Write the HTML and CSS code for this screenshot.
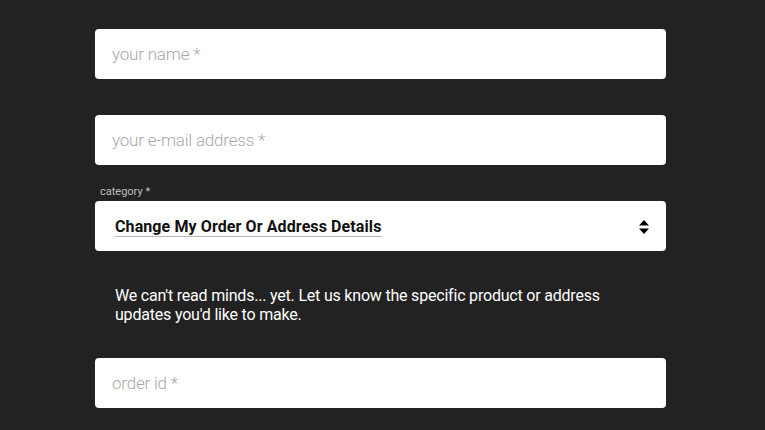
FILE: index.html
```html
<!DOCTYPE html>
<html>
<head>
<meta charset="utf-8">
<link rel="stylesheet" href="styles.css">
</head>
<body>
<form class="form">
  <div class="field field-first">
    <div class="input"><span class="placeholder">your name *</span></div>
  </div>
  <div class="field field-email">
    <div class="input"><span class="placeholder">your e-mail address *</span></div>
  </div>
  <div class="field field-category">
    <div class="label">category *</div>
    <div class="input select">
      <span class="value">Change My Order Or Address Details</span>
      <svg class="arrows" width="10" height="14" viewBox="0 0 10 14"><path d="M5 0 L10 5.5 H0 Z M0 8.5 H10 L5 14 Z" fill="#000"/></svg>
    </div>
  </div>
  <p class="note">We can't read minds... yet. Let us know the specific product or address updates you'd like to make.</p>
  <div class="field field-order">
    <div class="input"><span class="placeholder">order id *</span></div>
  </div>
</form>
</body>
</html>
```
FILE: styles.css
```css
html, body {
  margin: 0;
  padding: 0;
  background: #222222;
  height: 100%;
  overflow: hidden;
}
body {
  font-family: "Roboto", sans-serif;
}
.form {
  width: 571px;
  margin: 0 0 0 95px;
  padding-top: 29px;
}
.input {
  background: #fff;
  height: 50px;
  border-radius: 4px;
  display: flex;
  align-items: center;
  padding: 0 17px;
  box-sizing: border-box;
}
.placeholder {
  color: #a9a9a9;
  font-size: 17px;
  font-weight: 300;
  font-family: "Roboto", "DejaVu Sans", sans-serif;
  letter-spacing: -0.2px;
}
.field-email { margin-top: 36px; }
.field-category { margin-top: 21px; }
.label {
  color: #bdbdbd;
  font-size: 11px;
  font-family: "Roboto", sans-serif;
  margin-left: 5px;
  height: 15px;
  line-height: 11px;
}
.select {
  justify-content: space-between;
  padding: 0 17px 0 20px;
}
.value {
  color: #111;
  font-size: 16px;
  font-weight: 700;
  font-family: "Roboto", sans-serif;
  text-decoration: underline;
  text-decoration-color: #b5b5b5;
  text-underline-offset: 4px;
  letter-spacing: 0.1px;
}
.arrows { display: block; margin-top: 1px; }
.note {
  color: #fff;
  font-family: "Roboto", sans-serif;
  font-size: 16px;
  line-height: 19px;
  margin: 35px 0 0 20px;
  width: 500px;
  letter-spacing: -0.2px;
}
.field-order { margin-top: 34px; }
```
